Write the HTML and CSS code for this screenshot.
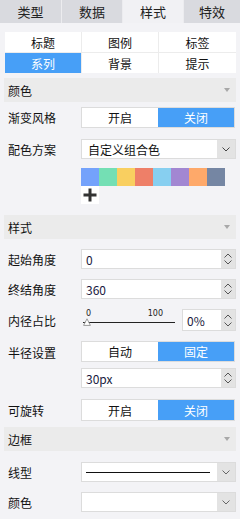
FILE: index.html
```html
<!DOCTYPE html>
<html lang="zh">
<head>
<meta charset="utf-8">
<link rel="stylesheet" href="styles.css">
</head>
<body>
<div class="tabs">
  <div class="tab">类型</div>
  <div class="tab">数据</div>
  <div class="tab active">样式</div>
  <div class="tab">特效</div>
</div>
<div class="main">
  <div class="subtabs">
    <div class="sub">标题</div>
    <div class="sub">图例</div>
    <div class="sub">标签</div>
    <div class="sub on">系列</div>
    <div class="sub">背景</div>
    <div class="sub">提示</div>
  </div>

  <div class="head h1"><span>颜色</span><i class="tri"></i></div>

  <div class="row r-grad">
    <div class="label">渐变风格</div>
    <div class="toggle"><div class="opt">开启</div><div class="opt on">关闭</div></div>
  </div>

  <div class="row r-scheme">
    <div class="label">配色方案</div>
    <div class="select"><div class="val">自定义组合色</div><div class="arrow"><svg width="8" height="5" viewBox="0 0 8 5"><polyline points="0.5,0.5 4,4 7.5,0.5" fill="none" stroke="#444" stroke-width="1"/></svg></div></div>
  </div>

  <div class="swatches">
    <i style="background:#74a2fb"></i><i style="background:#74dfb4"></i><i style="background:#f9cf60"></i><i style="background:#ee7f68"></i><i style="background:#87cff0"></i><i style="background:#a287d2"></i><i style="background:#fea96a"></i><i style="background:#7586a3"></i>
  </div>
  <div class="plusrow"><div class="plus"><svg width="14" height="14" viewBox="0 0 14 14"><rect x="5.5" y="0.5" width="3" height="13" fill="#333"/><rect x="0.5" y="5.5" width="13" height="3" fill="#333"/></svg></div></div>

  <div class="head h2"><span>样式</span><i class="tri"></i></div>

  <div class="row r-start">
    <div class="label">起始角度</div>
    <div class="spin"><div class="val">0</div><div class="btns"><svg width="8" height="5" viewBox="0 0 8 5"><polyline points="0.5,4.5 4,1 7.5,4.5" fill="none" stroke="#555"/></svg><svg width="8" height="5" viewBox="0 0 8 5"><polyline points="0.5,0.5 4,4 7.5,0.5" fill="none" stroke="#555"/></svg></div></div>
  </div>

  <div class="row r-end">
    <div class="label">终结角度</div>
    <div class="spin"><div class="val">360</div><div class="btns"><svg width="8" height="5" viewBox="0 0 8 5"><polyline points="0.5,4.5 4,1 7.5,4.5" fill="none" stroke="#555"/></svg><svg width="8" height="5" viewBox="0 0 8 5"><polyline points="0.5,0.5 4,4 7.5,0.5" fill="none" stroke="#555"/></svg></div></div>
  </div>

  <div class="row r-inner">
    <div class="label">内径占比</div>
    <div class="slider">
      <div class="ticks"><span>0</span><span>100</span></div>
      <div class="track"></div>
      <svg class="thumb" width="8" height="8" viewBox="0 0 8 8"><polygon points="4,0.8 7.4,7.4 0.6,7.4" fill="#fff" stroke="#999"/></svg>
    </div>
    <div class="spin small"><div class="val">0%</div><div class="btns"><svg width="8" height="5" viewBox="0 0 8 5"><polyline points="0.5,4.5 4,1 7.5,4.5" fill="none" stroke="#555"/></svg><svg width="8" height="5" viewBox="0 0 8 5"><polyline points="0.5,0.5 4,4 7.5,0.5" fill="none" stroke="#555"/></svg></div></div>
  </div>

  <div class="row r-radius top">
    <div class="label">半径设置</div>
    <div class="toggle"><div class="opt">自动</div><div class="opt on">固定</div></div>
  </div>

  <div class="row r-px">
    <div class="label"></div>
    <div class="spin"><div class="val">30px</div><div class="btns"><svg width="8" height="5" viewBox="0 0 8 5"><polyline points="0.5,4.5 4,1 7.5,4.5" fill="none" stroke="#555"/></svg><svg width="8" height="5" viewBox="0 0 8 5"><polyline points="0.5,0.5 4,4 7.5,0.5" fill="none" stroke="#555"/></svg></div></div>
  </div>

  <div class="row r-rot">
    <div class="label">可旋转</div>
    <div class="toggle"><div class="opt">开启</div><div class="opt on">关闭</div></div>
  </div>

  <div class="head h3"><span>边框</span><i class="tri"></i></div>

  <div class="row r-line">
    <div class="label">线型</div>
    <div class="select"><div class="val"><div class="line"></div></div><div class="arrow"><svg width="8" height="5" viewBox="0 0 8 5"><polyline points="0.5,0.5 4,4 7.5,0.5" fill="none" stroke="#666" stroke-width="1"/></svg></div></div>
  </div>

  <div class="row r-color">
    <div class="label">颜色</div>
    <div class="select"><div class="val"></div><div class="arrow"><svg width="8" height="5" viewBox="0 0 8 5"><polyline points="0.5,0.5 4,4 7.5,0.5" fill="none" stroke="#666" stroke-width="1"/></svg></div></div>
  </div>
</div>
</body>
</html>
```
FILE: styles.css
```css
* { box-sizing: border-box; }
html, body { margin: 0; padding: 0; }
body {
  width: 240px;
  height: 519px;
  overflow: hidden;
  background: #f3f3f6;
  font-family: "Noto Sans CJK SC", "Microsoft YaHei", sans-serif;
  font-size: 12px;
  color: #111;
}
.tabs {
  display: grid;
  grid-template-columns: 61px 60px 60px 1fr;
  column-gap: 1px;
  background: #ececef;
  height: 23px;
}
.tab {
  background: #d9dadf;
  display: flex;
  align-items: center;
  justify-content: center;
  font-size: 13px;
  color: #222;
}
.tab.active { background: #f1f1f4; }
.main { padding: 0 4px; }
.subtabs {
  margin: 9px 0 0 1px;
  display: grid;
  grid-template-columns: 76px 76px 1fr;
  grid-auto-rows: 20px;
  gap: 1px;
  background: #ececec;
}
.sub {
  background: #fff;
  display: flex;
  align-items: center;
  justify-content: center;
  font-size: 12px;
  color: #111;
}
.sub.on { background: #479ff7; color: #fff; }
.head {
  height: 24px;
  background: #ebebeb;
  display: flex;
  align-items: center;
  justify-content: space-between;
  padding: 0 6px 0 4px;
  font-size: 12px;
  color: #111;
}
.tri {
  width: 0; height: 0;
  border-left: 3.5px solid transparent;
  border-right: 3.5px solid transparent;
  border-top: 4px solid #a8a8a8;
}
.h1 { margin-top: 5px; }
.h2 { margin-top: 11px; }
.h3 { margin-top: 6px; }
.row { display: flex; align-items: center; }
.row.top { align-items: flex-start; }
.label { width: 77px; padding-left: 4px; flex: none; font-size: 12px; color: #111; }
.toggle {
  width: 154px;
  height: 21px;
  display: flex;
  border: 1px solid #dcdcdc;
  background: #fff;
}
.opt { flex: 1; display: flex; align-items: center; justify-content: center; font-size: 12px; color: #111; }
.opt.on { background: #479ff7; color: #fff; }
.select {
  width: 155px;
  height: 20px;
  display: flex;
  border: 1px solid #dcdcdc;
  background: #fff;
}
.select .val { flex: 1; display: flex; align-items: center; padding-left: 6px; font-size: 12px; }
.select .arrow { width: 18px; background: #e3e3e3; display: flex; align-items: center; justify-content: center; }
.line { width: 124px; height: 1px; background: #111; margin-left: -2px; }
.spin {
  width: 155px;
  height: 20px;
  display: flex;
  border: 1px solid #dcdcdc;
  background: #fff;
}
.spin .val { flex: 1; display: flex; align-items: center; padding-left: 4px; font-size: 12px; color: #1a1a40; }
.spin .btns { width: 14px; background: #e3e3e3; display: flex; flex-direction: column; align-items: center; justify-content: space-around; padding: 2px 0; }
.spin.small { width: 54px; height: 22px; margin-left: auto; }
.r-grad { margin-top: 5px; }
.r-scheme { margin-top: 11px; }
.swatches { margin: 9px 0 0 77px; display: flex; height: 18px; }
.swatches i { width: 18px; height: 18px; display: block; }
.plusrow { margin-left: 77px; }
.plus { width: 18px; height: 18px; background: #fff; display: flex; align-items: center; justify-content: center; }
.r-start { margin-top: 10px; }
.r-end { margin-top: 10px; }
.r-inner { margin-top: 10px; height: 22px; width: 232px; }
.slider { position: relative; width: 96px; height: 22px; flex: none; }
.ticks { display: flex; justify-content: space-between; padding: 0 14px 0 5px; font-family: "DejaVu Sans", sans-serif; font-size: 8px; line-height: 9px; color: #222; }
.track { position: absolute; left: 2px; right: 2px; top: 13px; height: 1px; background: #222; }
.thumb { position: absolute; left: 2px; top: 9px; }
.r-radius { margin-top: 10px; }
.r-radius .label { padding-top: 3px; }
.r-px { margin-top: 6px; }
.r-rot { margin-top: 11px; }
.r-rot .toggle { height: 22px; }
.r-line { margin-top: 11px; }
.r-color { margin-top: 10px; }
```
